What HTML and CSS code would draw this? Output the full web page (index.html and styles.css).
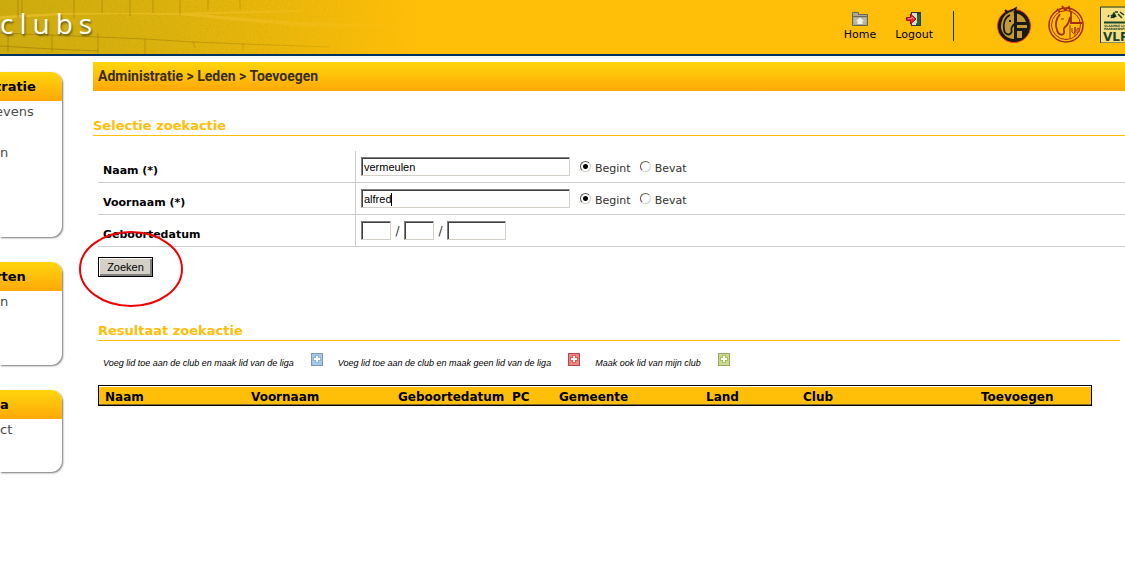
FILE: index.html
```html
<!DOCTYPE html>
<html lang="nl">
<head>
<meta charset="utf-8">
<title>Leden toevoegen</title>
<link rel="stylesheet" href="styles.css">
</head>
<body>
<header class="top">
  <svg class="photo" width="420" height="54" viewBox="0 0 420 54" aria-hidden="true">
    <defs>
      <linearGradient id="fade"><stop offset="0" stop-color="#cfab12"/><stop offset=".4" stop-color="#e0b20f"/><stop offset=".75" stop-color="#f3b90b"/><stop offset="1" stop-color="#ffbe08"/></linearGradient>
      <linearGradient id="vis"><stop offset="0" stop-color="#fff"/><stop offset=".55" stop-color="#bbb"/><stop offset=".98" stop-color="#000"/></linearGradient>
      <mask id="m"><rect width="420" height="54" fill="url(#vis)"/></mask>
      <filter id="grain" x="0" y="0" width="100%" height="100%"><feTurbulence type="fractalNoise" baseFrequency=".45 .6" numOctaves="2" seed="4"/><feColorMatrix values="0 0 0 0 .5  0 0 0 0 .42  0 0 0 0 0  0 0 0 1.3 -.45"/></filter>
    </defs>
    <rect width="420" height="54" fill="url(#fade)"/>
    <g mask="url(#m)">
      <rect width="420" height="54" filter="url(#grain)" opacity=".8"/>
      <path d="M0 19 60 15 130 14 180 15 230 20 300 26 420 29V26L300 22 230 17 200 14 300 12 300 10 180 13 60 13 0 16Z" fill="#f3c534" opacity=".6"/>
      <g stroke="#8c6c0c" fill="none" opacity=".5"><path d="M18 0V18M22 0V17M74 0V18M102 0V13M130 0V16M153 0V13M180 0V15M208 0V10M240 0V9M0 33 98 37 145 39 193 42 243 44 330 47M0 46 52 49 98 51M8 34V52M52 34V52M98 33V54M145 39V54M193 41 195 48M243 43V50"/></g>
    </g>
  </svg>
  <div class="brand">clubs</div>
  <nav class="tools">
    <a href="#home"><svg width="16" height="16" viewBox="0 0 16 16"><path d="M.5 14.5V1.5H6.5V3.5H15.5V14.5Z" fill="#a9a996" stroke="#666758"/><path d="M1 5.500H15" stroke="#666758"/><path d="M2 7H14V13H2Z" fill="#b9b9a6"/><path d="M8 6.500 12 10H10.500V13H5.500V10H4Z" fill="#f2f2df"/></svg><span>Home</span></a>
    <a href="#logout"><svg width="16" height="16" viewBox="0 0 16 16"><path d="M5 1H15V15H5Z" fill="#303630"/><path d="M6 2H10V14H6Z" fill="#efefe7"/><path d="M11 4 14 2V14H11Z" fill="#246b28"/><path d="M6 2H11V12L8 14H6Z" fill="#d7dad2"/><path d="M.5 6.500H4.500V3L10 8 4.500 13V9.500H.5Z" fill="#f12626" stroke="#a60c0c"/><path d="M2 7.500H6V6L8 8" stroke="#ff9186" fill="none"/></svg><span>Logout</span></a>
  </nav>
  <div class="logos">
    <svg width="36" height="38" viewBox="0 0 36 38"><circle cx="18" cy="21" r="16.500" fill="#171a16" stroke="#f3342b"/><path d="M18 8A13 13 0 0 0 18 34Z" fill="#c59a32"/><path d="M21 8.500A13 13 0 0 1 30 17H21Z" fill="#c59a32"/><path d="M21 20H31V23H21ZM21 26H26V33H21Z" fill="#c59a32"/><path d="M5 16C7 10 10 7 15 6L20 3 18 8" fill="#c59a32" stroke="#171a16" stroke-width="1.500"/><path d="M14 10C9 12 7 18 8 24C8 29 13 31 15 28C17 26 14 25 16 22L18 19" stroke="#171a16" stroke-width="1.800" fill="none"/><path d="M9 5 12 8M13 16H15" stroke="#171a16" stroke-width="2"/></svg>
    <svg width="36" height="38" viewBox="0 0 36 38"><g fill="none" stroke="#a72d12"><circle cx="18" cy="20" r="17" stroke-width="1.500"/><circle cx="18" cy="20" r="14.500"/><path d="M9 4 12 7M14 1 17 5 21 2 22 6M12 9C8 14 7 20 9 25C10 30 15 31 16 28C17 25 14 25 17 22Q21 19 22 12M23 6V19M23 18H34" stroke-width="1.800"/><path d="M22 20V33M24 23V27Q26 30 27 26V22V31M29 28V24Q31 21 31 27"/><path d="M13 14H16"/></g></svg>
    <svg class="vlp" width="25" height="38" viewBox="0 0 25 38"><rect x=".5" y="2.500" width="40" height="36" fill="#f8df82"/><path d="M25 2.500H.5V38.500H25" transform="translate(0 -.5)" fill="none" stroke="#174331"/><path d="M8 12 9 10M11 13 14 8 16 12M15 7H18M18 9 22 13M20 7 24 10M11 10 14 13" stroke="#174331" stroke-width="1.500"/><path d="M4 17.500H25" stroke="#174331" stroke-width="2"/><text x="4" y="22" class="vlp-small">VLAAMSE LIGA</text><text x="4" y="25" class="vlp-small">PAARDENSPORT</text><text x="3" y="36" class="vlp-big">VLP</text></svg>
  </div>
</header>
<div class="page">
  <aside class="side">
    <section class="box box-admin"><h2 class="cut">tratie</h2><a class="cut" href="#gegevens">evens</a><a class="second" href="#leden">n</a></section>
    <section class="box box-cards"><h2 class="cut">rten</h2><a href="#kaarten">n</a></section>
    <section class="box box-extra"><h2>a</h2><a href="#contact">ct</a></section>
  </aside>
  <main class="main">
    <div class="crumbs">Administratie &gt; Leden &gt; Toevoegen</div>
    <h1 class="title">Selectie zoekactie</h1>
    <form class="search">
      <div class="row"><label class="name" for="naam">Naam (*)</label><div class="field"><input class="text wide" id="naam" value="vermeulen">
        <span class="choices"><input type="radio" name="n" id="n1" checked><label for="n1">Begint</label><input type="radio" name="n" id="n2"><label for="n2">Bevat</label></span></div></div>
      <div class="row"><label class="name" for="voornaam">Voornaam (*)</label><div class="field"><span class="entry"><input class="text wide" id="voornaam" value="alfred"><i class="caret"></i></span>
        <span class="choices"><input type="radio" name="v" id="v1" checked><label for="v1">Begint</label><input type="radio" name="v" id="v2"><label for="v2">Bevat</label></span></div></div>
      <div class="row"><label class="name" for="dag">Geboortedatum</label><div class="field"><input class="text short" id="dag"><span class="slash">/</span><input class="text short" aria-label="Maand"><span class="slash">/</span><input class="text year" aria-label="Jaar"></div></div>
      <div class="action"><button type="button">Zoeken</button><svg class="ring" width="104" height="78" viewBox="0 0 104 78" aria-hidden="true"><ellipse cx="52" cy="39" rx="51" ry="37"/></svg></div>
    </form>
    <section class="result">
      <h2 class="title">Resultaat zoekactie</h2>
      <div class="legend">
        <span>Voeg lid toe aan de club en maak lid van de liga</span><svg class="plus blue" width="12" height="13" viewBox="0 0 12 13"><rect x=".5" y=".5" width="11" height="12"/><path d="M4 2H8V4H10V8H8V10H4V8H2V4H4Z"/><path class="cross" d="M5 3H7V5H9V7H7V9H5V7H3V5H5Z"/></svg>
        <span>Voeg lid toe aan de club en maak geen lid van de liga</span><svg class="plus red" width="12" height="13" viewBox="0 0 12 13"><rect x=".5" y=".5" width="11" height="12"/><path d="M4 2H8V4H10V8H8V10H4V8H2V4H4Z"/><path class="cross" d="M5 3H7V5H9V7H7V9H5V7H3V5H5Z"/></svg>
        <span>Maak ook lid van mijn club</span><svg class="plus green" width="12" height="13" viewBox="0 0 12 13"><rect x=".5" y=".5" width="11" height="12"/><path d="M4 2H8V4H10V8H8V10H4V8H2V4H4Z"/><path class="cross" d="M5 3H7V5H9V7H7V9H5V7H3V5H5Z"/></svg>
      </div>
      <table class="list">
        <colgroup><col class="c1"><col class="c2"><col class="c3"><col class="c4"><col class="c5"><col class="c6"><col class="c7"><col class="c8"></colgroup>
        <thead><tr><th>Naam</th><th>Voornaam</th><th>Geboortedatum</th><th>PC</th><th>Gemeente</th><th>Land</th><th>Club</th><th>Toevoegen</th></tr></thead>
      </table>
    </section>
  </main>
</div>
</body>
</html>
```
FILE: styles.css
```css
* { box-sizing: border-box; }
body { margin: 0; background: #fff; color: #333; font: 12px "DejaVu Sans", Verdana, sans-serif; overflow-x: hidden; }
h1, h2 { margin: 0; }
a { color: inherit; text-decoration: none; }
svg { display: block; flex: none; }

.top { display: flex; position: relative; height: 56px; background: #ffbe08; border-bottom: 2px solid #003460; }
.photo { position: absolute; left: 0; top: 0; }
.brand { position: relative; color: #fff; font: 28px/46px "Open Sans", sans-serif; letter-spacing: 6px; text-shadow: 1px 2px 2px #695a17; }
.tools { display: flex; gap: 19px; margin: 11px 0 0 auto; height: 30px; padding-right: 20px; border-right: 1px solid #003460; color: #000; font-size: 11px; line-height: 14px; }
.tools a { display: flex; flex-direction: column; align-items: center; gap: 1px; }
.logos { display: flex; gap: 16px; padding: 5px 0 0 42px; }
.vlp-small { font: bold 3px "DejaVu Sans", sans-serif; fill: #174331; }
.vlp-big { font: bold 12px "DejaVu Sans", sans-serif; fill: #174331; }

.page { display: flex; gap: 31px; }
.side { flex: none; width: 62px; padding: 16px 0; display: flex; flex-direction: column; gap: 25px; }
.box { border-radius: 0 11px 11px 0; box-shadow: 1px 1px 2px #777; background: #fff; font-size: 13px; line-height: 21px; color: #4b4b4b; }
.box h2 { height: 29px; border-radius: 0 11px 0 0; background: linear-gradient(#ffd60c, #ffa808); color: #000; font-size: 13px; line-height: 29px; }
.box a { display: block; }
.box .cut { text-indent: -5px; }
.box .second { margin-top: 20px; }
.box-admin { height: 165px; }
.box-cards { height: 103px; }
.box-extra { height: 82px; }

.main { flex: 1; min-width: 0; padding-top: 6px; }
.crumbs { height: 29px; padding-left: 5px; background: linear-gradient(#ffd60c, #ffa808); font: bold 14px/29px Roboto, "Liberation Sans", sans-serif; color: #3a2d1c; }
.title { color: #ffbe08; font-size: 13px; line-height: 18px; border-bottom: 1px solid #ffbe08; }
h1.title { margin-top: 26px; }

.search { padding: 15px 0 0 5px; }
.row { display: flex; height: 32px; border-bottom: 1px solid #ccc; }
.name { flex: none; width: 257px; padding: 12px 0 0 5px; font-size: 11px; line-height: 16px; font-weight: bold; color: #000; }
.field { flex: 1; display: flex; align-items: center; border-left: 1px solid #ccc; padding-left: 5px; }
.text { height: 19px; padding: 2px; border: 1px solid; border-color: #808080 #d4d0c8 #d4d0c8 #808080; border-radius: 0; background: #fff; box-shadow: inset 1px 1px #404040; color: #000; font: 11px "Liberation Sans", Arial, sans-serif; outline: none; }
.wide { width: 209px; }
.short { width: 30px; }
.year { width: 59px; }
.slash { width: 13px; text-align: center; }
.entry { position: relative; display: flex; }
.caret { position: absolute; left: 30px; top: 4px; width: 1px; height: 13px; background: #000; }
.choices { display: flex; align-items: center; padding-left: 10px; font-size: 11px; }
.choices label { padding: 3px 9px 0 4px; }
.choices input { appearance: none; width: 11px; height: 11px; margin: 0; border: 1px solid; border-color: #555 #d4d0c8 #d4d0c8 #555; border-radius: 50%; background: #fff; }
.choices input:checked { background: radial-gradient(circle, #000 2px, #fff 3px); }
.action { position: relative; padding-top: 10px; display: flex; }
.action button { width: 55px; height: 20px; padding: 0; border: 1px solid #000; border-radius: 0; background: #d4d0c8; box-shadow: inset 1px 1px #fff, inset -2px -2px #808080; font: 11px "Liberation Sans", Arial, sans-serif; color: #000; }
.ring { position: absolute; left: -19px; top: -17px; fill: none; stroke: #f00000; stroke-width: 2; pointer-events: none; }

.result { padding: 45px 5px 0; }
.legend { display: flex; align-items: center; padding: 7px 0 0 5px; color: #000; font: italic 9px/14px "Liberation Sans", Arial, sans-serif; }
.legend span { padding-top: 8px; }
.plus { margin: 0 15px 0 17px; }
.plus .cross { fill: #fff; }
.blue { fill: #8eb4dc; }
.blue rect { fill: #a9c7e8; stroke: #7899b9; }
.red { fill: #e05a5c; }
.red rect { fill: #f08583; stroke: #b44646; }
.green { fill: #a7c552; }
.green rect { fill: #cada96; stroke: #98a967; }
.list { width: calc(100% - 28px); margin-top: 15px; table-layout: fixed; border-collapse: separate; border-spacing: 0; border: 1px solid #000; background: #ffbe08; box-shadow: inset 0 1px #fff, inset 0 -1px #806a30; color: #000; font-size: 12px; }
.list th { height: 19px; padding: 2px 0 0 6px; text-align: left; line-height: 16px; white-space: nowrap; }
.c1 { width: 146px; }
.c2 { width: 147px; }
.c3 { width: 114px; }
.c4 { width: 47px; }
.c5 { width: 147px; }
.c6 { width: 97px; }
.c7 { width: 178px; }
```
